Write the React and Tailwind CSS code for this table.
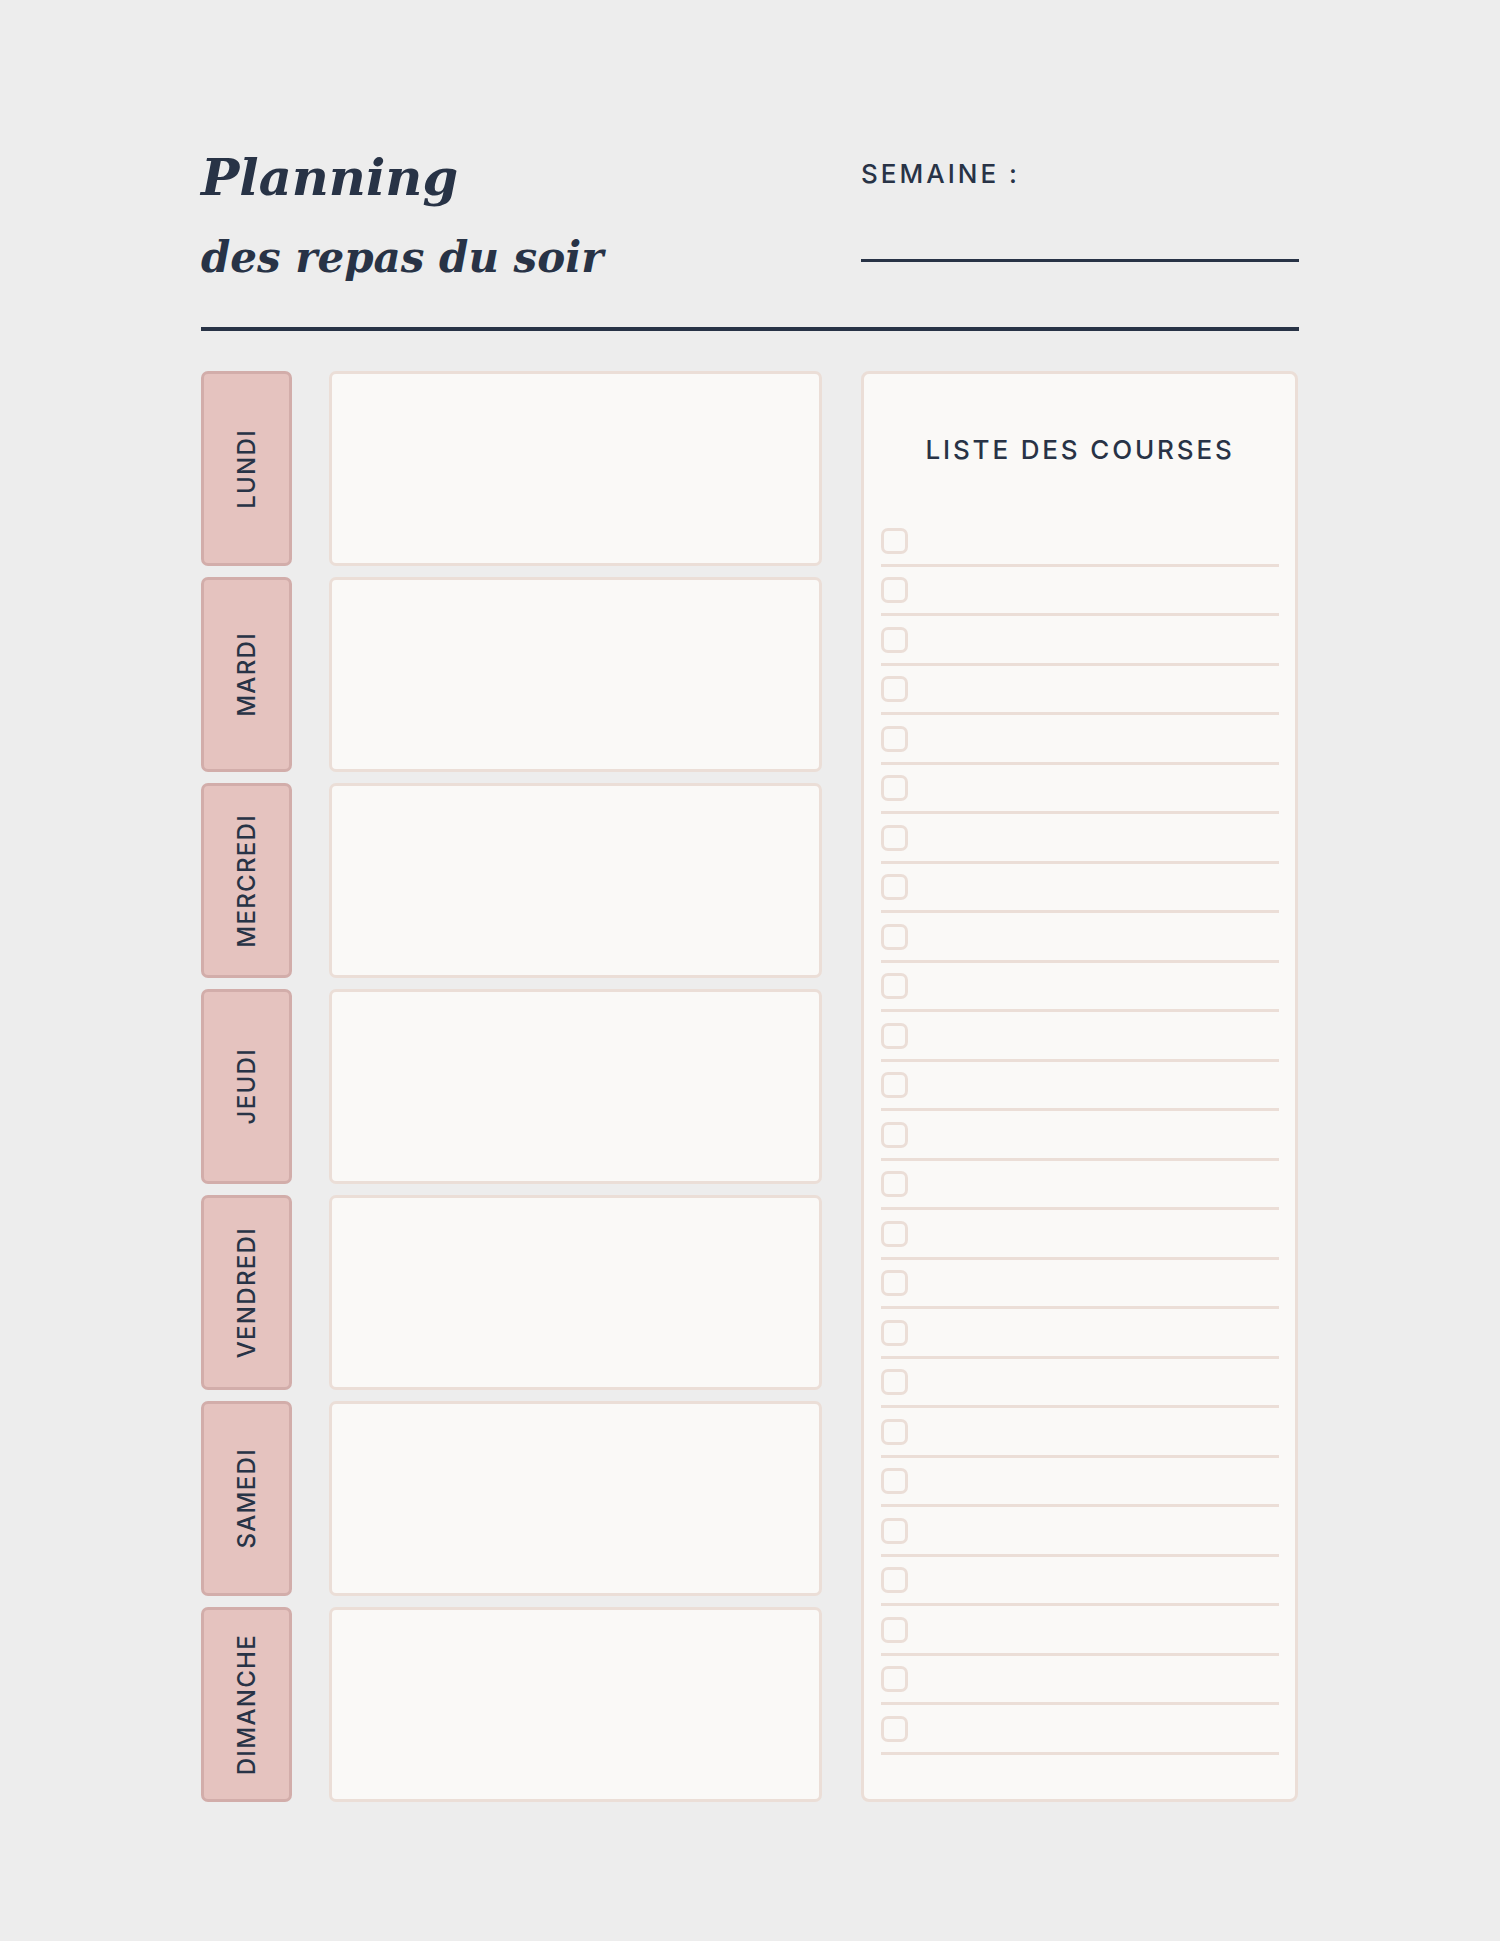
export default function App() {
  const days = ["LUNDI", "MARDI", "MERCREDI", "JEUDI", "VENDREDI", "SAMEDI", "DIMANCHE"];
  const items = Array.from({ length: 25 }, (_, i) => i);
  const serif = "font-['DejaVu_Serif',serif]";
  return (
    <div className="min-h-[1941px] w-[1500px] bg-[#ededed] text-[#283346] font-['Inter',sans-serif]">
      <div className="ml-[201px] w-[1098px] pt-[152px]">
        <header className="flex h-[175px] justify-between">
          <div>
            <h1 className={`${serif} text-[51px] font-bold italic leading-none`}>Planning</h1>
            <h2 className={`${serif} mt-[34px] text-[42px] font-bold italic leading-none`}>des repas du soir</h2>
          </div>
          <div className="w-[438px]">
            <p className="mt-[8.5px] text-[26px] font-medium leading-none tracking-[3px]">SEMAINE :</p>
            <div className="mt-[72px] h-[3px] bg-[#283346]" />
          </div>
        </header>
        <div className="h-[4px] bg-[#283346]" />
        <div className="mt-[40px] flex">
          <div className="flex w-[91px] shrink-0 flex-col gap-[11px]">
            {days.map((d) => (
              <div
                key={d}
                className="flex h-[195px] items-center justify-center rounded-[7px] border-[3px] border-[#d2adaa] bg-[#e5c3bf]"
              >
                <span className="rotate-180 text-[24px] font-medium leading-none tracking-[1.3px] [writing-mode:vertical-rl]">
                  {d}
                </span>
              </div>
            ))}
          </div>
          <div className="ml-[37px] flex w-[493px] shrink-0 flex-col gap-[11px]">
            {days.map((d) => (
              <div key={d} className="h-[195px] rounded-[7px] border-[3px] border-[#ebded7] bg-[#faf9f7]" />
            ))}
          </div>
          <div className="ml-[39px] h-[1431px] w-[437px] shrink-0 rounded-[8px] border-[3px] border-[#ebded7] bg-[#faf9f7] pl-[17px] pr-[16px] pt-[63px]">
            <p className="text-center text-[26px] font-medium leading-none tracking-[2.85px]">LISTE DES COURSES</p>
            <div className="mt-[64.5px] flex flex-col gap-[10.5px]">
              {items.map((i) => (
                <div key={i}>
                  <div className="h-[26px] w-[27px] rounded-[7px] border-[3px] border-[#ebded7]" />
                  <div className="mt-[10px] h-[3px] bg-[#ebded7]" />
                </div>
              ))}
            </div>
          </div>
        </div>
      </div>
    </div>
  );
}
